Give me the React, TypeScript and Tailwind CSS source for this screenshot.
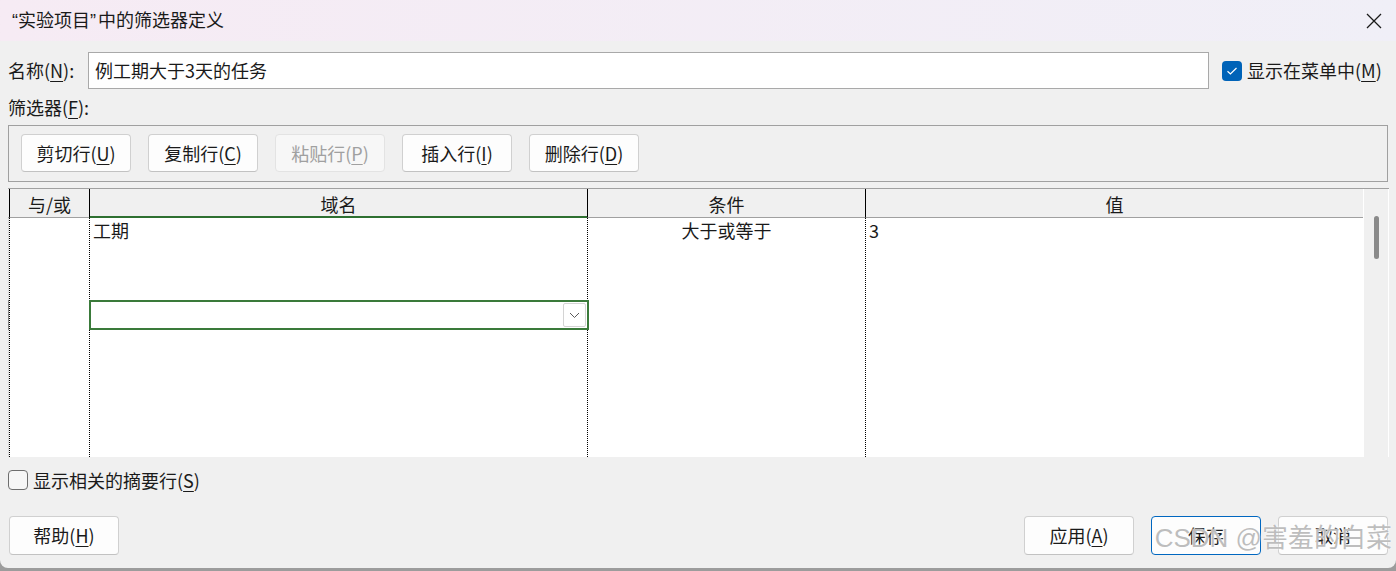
import React from 'react';

const FONT = "font-['Noto_Sans_CJK_SC','Noto_Sans',sans-serif]";

// Mnemonic letter, underlined like a Windows access key
const K = ({ c }: { c: string }) => <u className="underline decoration-1 underline-offset-[3px]">{c}</u>;

// narrow western quote marks, like the dialog's UI font
const Q = ({ c }: { c: string }) => <span className="font-['Liberation_Sans',sans-serif]">{c}</span>;

const Btn = ({ label, k, disabled }: { label: string; k?: string; disabled?: boolean }) => (
    <div
        className={`flex h-[38px] w-[110px] shrink-0 items-center justify-center rounded-[4px] border text-[18px] ${
            disabled ? 'border-[#e3e3e3] bg-[#f7f7f7] text-[#a0a0a0]' : 'border-[#d0d0d0] border-b-[#c2c2c2] bg-[#fdfdfd] text-[#1a1a1a]'
        }`}
    >
        {label}
        {k && (
            <>
                (<K c={k} />)
            </>
        )}
    </div>
);

const ToolbarButtons = [
    { label: '剪切行', k: 'U' },
    { label: '复制行', k: 'C' },
    { label: '粘贴行', k: 'P', disabled: true },
    { label: '插入行', k: 'I' },
    { label: '删除行', k: 'D' },
];

export default function App() {
    return (
        <div className={`${FONT} h-[571px] w-[1396px] overflow-hidden bg-[#9c9c9c] text-[#1a1a1a]`}>
            <div className="h-[568px] overflow-hidden rounded-b-[8px] bg-[#f0f0f0]">
                {/* Title bar */}
                <div className="flex h-[41px] items-center justify-between bg-gradient-to-r from-[#f6ebf4] to-[#f0eff7] pl-[12px] pr-[14px]">
                    <span className="text-[18px]">
                        <Q c="“" />
                        实验项目
                        <Q c="”" />
                        <span className="ml-[2px]">中的筛选器定义</span>
                    </span>
                    <svg width="16" height="16" viewBox="0 0 16 16">
                        <path d="M1 1 L15 15 M15 1 L1 15" stroke="#1a1a1a" strokeWidth="1.3" />
                    </svg>
                </div>

                <div className="px-[8px] text-[18px]">
                    {/* Name row */}
                    <div className="mt-[11px] flex h-[37px] items-center">
                        <span className="w-[80px]">
                            名称(<K c="N" />):
                        </span>
                        <div className="flex h-[37px] w-[1121px] items-center border border-[#a9a9a9] bg-white pl-[6px]">例工期大于3天的任务</div>
                        <div className="ml-[13px] flex h-[20px] w-[20px] items-center justify-center rounded-[4px] bg-[#0063b8]">
                            <svg width="12" height="10" viewBox="0 0 12 10">
                                <path d="M1.5 5.2 L4.4 8 L10.5 2" fill="none" stroke="#fff" strokeWidth="1.2" />
                            </svg>
                        </div>
                        <span className="ml-[5px]">
                            显示在菜单中(<K c="M" />)
                        </span>
                    </div>

                    <div className="flex h-[36px] items-center">
                        筛选器(<K c="F" />):
                    </div>

                    {/* Toolbar */}
                    <div className="flex h-[57px] w-[1380px] gap-[17px] border border-[#a0a0a0] pl-[12px] pt-[8px]">
                        {ToolbarButtons.map((b) => (
                            <Btn key={b.k} {...b} />
                        ))}
                    </div>

                    {/* Grid */}
                    <div className="mt-[6px] flex h-[269px] w-[1381px] border-t border-[#a0a0a0]">
                        <div className="flex w-[1355px] flex-col">
                            <div className="flex h-[29px]">
                                <div className="w-[1px] border-b border-[#a0a0a0]" />
                                <div className="flex w-[80px] items-center justify-center border-b border-l border-[#a0a0a0] border-l-black pt-[3px]">与/或</div>
                                <div className="flex w-[498px] items-center justify-center border-b border-l border-b-[#2e7031] border-l-black pt-[3px] shadow-[inset_0_-1px_0_#2e7031]">
                                    域名
                                </div>
                                <div className="flex w-[278px] items-center justify-center border-b border-l border-[#a0a0a0] border-l-black pt-[3px]">条件</div>
                                <div className="flex w-[498px] items-center justify-center border-b border-l border-[#a0a0a0] border-l-black pt-[3px]">值</div>
                            </div>
                            <div className="relative flex h-[240px] bg-white leading-[24px]">
                                <div className="flex w-[1px] flex-col bg-[#dcdcdc]">
                                    <div className="mt-[82px] h-[30px] bg-[#8a8a8a]" />
                                </div>
                                <div className="w-[80px] border-l border-dotted border-black" />
                                <div className="w-[498px] border-l border-dotted border-black pl-[3px]">工期</div>
                                <div className="w-[278px] border-l border-dotted border-black text-center">大于或等于</div>
                                <div className="w-[498px] border-l border-dotted border-black pl-[3px]">3</div>

                                {/* Active cell editor */}
                                <div className="absolute left-[81px] top-[82px] flex h-[30px] w-[500px] items-center justify-end border-2 border-[#3a7a3a] bg-white pr-[1px]">
                                    <div className="flex h-[24px] w-[23px] items-center justify-center rounded-[2px] border border-[#d4d4d4] bg-white">
                                        <svg width="11" height="7" viewBox="0 0 11 7">
                                            <path d="M1 1 L5.5 5.5 L10 1" fill="none" stroke="#5a5a5a" strokeWidth="1" />
                                        </svg>
                                    </div>
                                </div>
                            </div>
                        </div>
                        <div className="relative w-[26px] border-l border-r border-white bg-[#f0f0f0]">
                            <div className="absolute left-[10px] top-[27px] h-[43px] w-[5px] rounded-full bg-[#8a8a8a]" />
                        </div>
                    </div>

                    {/* Summary rows */}
                    <div className="mt-[13px] flex h-[20px] items-center">
                        <div className="h-[20px] w-[20px] rounded-[4px] border border-[#6e6e6e] bg-[#f6f6f6]" />
                        <span className="ml-[5px]">
                            显示相关的摘要行(<K c="S" />)
                        </span>
                    </div>

                    {/* Bottom buttons */}
                    <div className="relative mt-[26px] flex h-[39px] items-center pl-[1px]">
                        <div className="flex h-[39px] w-[110px] items-center justify-center rounded-[4px] border border-[#d0d0d0] border-b-[#c2c2c2] bg-[#fdfdfd]">
                            帮助(<K c="H" />)
                        </div>
                        <div className="ml-auto flex gap-[17px]">
                            <div className="flex h-[39px] w-[110px] items-center justify-center rounded-[4px] border border-[#d0d0d0] border-b-[#c2c2c2] bg-[#fdfdfd]">
                                应用(<K c="A" />)
                            </div>
                            <div className="flex h-[39px] w-[110px] items-center justify-center rounded-[4px] border border-[#0067c0] bg-[#fdfdfd]">保存</div>
                            <div className="flex h-[39px] w-[110px] items-center justify-center rounded-[4px] border border-[#d0d0d0] border-b-[#c2c2c2] bg-[#fdfdfd]">取消</div>
                        </div>

                        {/* Watermark */}
                        <span className="pointer-events-none absolute right-[-4px] top-[9px] font-['Liberation_Sans','Noto_Sans_CJK_SC',sans-serif] text-[26px] leading-none text-[#a8a8a8]/75 [text-shadow:0_0_2px_#fff,0_0_1px_#fff]">
                            CSDN @害羞的白菜
                        </span>
                    </div>
                </div>
            </div>
        </div>
    );
}
